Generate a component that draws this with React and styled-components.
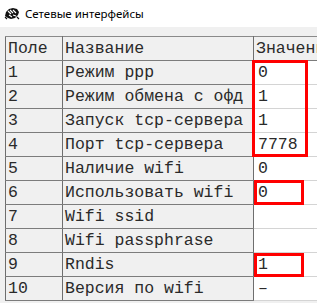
import React from 'react';
import styled, { createGlobalStyle } from 'styled-components';

const GlobalStyle = createGlobalStyle`
  html, body {
    margin: 0;
    padding: 0;
    background: #ffffff;
  }
`;

const Window = styled.div`
  width: 317px;
  height: 303px;
  display: flex;
  flex-direction: column;
  position: relative;
  overflow: hidden;
`;

const TitleBar = styled.div`
  height: 27px;
  flex-shrink: 0;
  display: flex;
  align-items: center;
  gap: 5px;
  padding-left: 4px;
  background: #ffffff;
  font-family: "Noto Sans", "Liberation Sans", sans-serif;
  font-size: 11.5px;
  color: #000;
`;

const Content = styled.div`
  flex: 1;
  background: #f0f0f0;
  padding: 9px 0 0 5px;
  overflow: hidden;
`;

const Table = styled.table`
  border-collapse: collapse;
  table-layout: fixed;
  width: 360px;
  font-family: "Liberation Mono", "Courier New", monospace;
  font-size: 16.5px;
  color: #2a2a2a;
  border-top: 1px solid #8a8a8a;
  border-left: 1px solid #6e6e6e;
`;

const Cell = styled.td`
  height: 23px;
  padding: 0 0 0 ${p => (p.$value ? 4 : 2)}px;
  white-space: nowrap;
  overflow: hidden;
  line-height: 23px;
  background: ${p => (p.$value ? '#ffffff' : '#f0f0f0')};
  border-bottom: 1px solid ${p => (p.$value ? '#d4d4d4' : '#7c7c7c')};
  border-right: 1px solid ${p => (p.$value ? 'transparent' : '#6e6e6e')};
`;

const HeadCell = styled(Cell).attrs({ as: 'th' })`
  font-weight: normal;
  text-align: left;
  background: #f0f0f0;
  border-bottom: 1px solid #7c7c7c;
`;

const Mark = styled.div`
  position: absolute;
  border: 3px solid #ff0000;
  box-sizing: border-box;
  pointer-events: none;
`;

const NetIcon = () => (
  <svg width="16" height="13" viewBox="0 0 16 13">
    <path d="M2 5 L5 2 L9 1 L13 2 L15 5 L14 8 L11 11 L7 12 L4 11 L1 9 Z" fill="#111" />
    <path d="M4 4 L7 7 M6 3 L9 6 M9 3 L12 6 M5 8 L8 10 M9 8 L12 9" stroke="#fff" strokeWidth="1.1" />
    <path d="M1 10 L3 12 M13 10 L15 12" stroke="#111" strokeWidth="1.2" />
  </svg>
);

const rows = [
  ['1', 'Режим ppp', '0'],
  ['2', 'Режим обмена с офд', '1'],
  ['3', 'Запуск tcp-сервера', '1'],
  ['4', 'Порт tcp-сервера', '7778'],
  ['5', 'Наличие wifi', '0'],
  ['6', 'Использовать wifi', '0'],
  ['7', 'Wifi ssid', ''],
  ['8', 'Wifi passphrase', ''],
  ['9', 'Rndis', '1'],
  ['10', 'Версия по wifi', '–'],
];

const marks = [
  { left: 252, top: 60, width: 56, height: 97 },
  { left: 254, top: 180, width: 50, height: 25 },
  { left: 254, top: 253, width: 50, height: 24 },
];

const App = () => {
  return (
    <>
      <GlobalStyle />
      <Window>
        <TitleBar>
          <NetIcon />
          <span>Сетевые интерфейсы</span>
        </TitleBar>
        <Content>
          <Table>
            <colgroup>
              <col style={{ width: 57 }} />
              <col style={{ width: 191 }} />
              <col />
            </colgroup>
            <thead>
              <tr>
                <HeadCell>Поле</HeadCell>
                <HeadCell>Название</HeadCell>
                <HeadCell>Значение</HeadCell>
              </tr>
            </thead>
            <tbody>
              {rows.map(([n, name, val]) => (
                <tr key={n}>
                  <Cell>{n}</Cell>
                  <Cell>{name}</Cell>
                  <Cell $value>{val}</Cell>
                </tr>
              ))}
            </tbody>
          </Table>
        </Content>
        {marks.map((m, i) => (
          <Mark key={i} style={m} />
        ))}
      </Window>
    </>
  );
};

export default App;
